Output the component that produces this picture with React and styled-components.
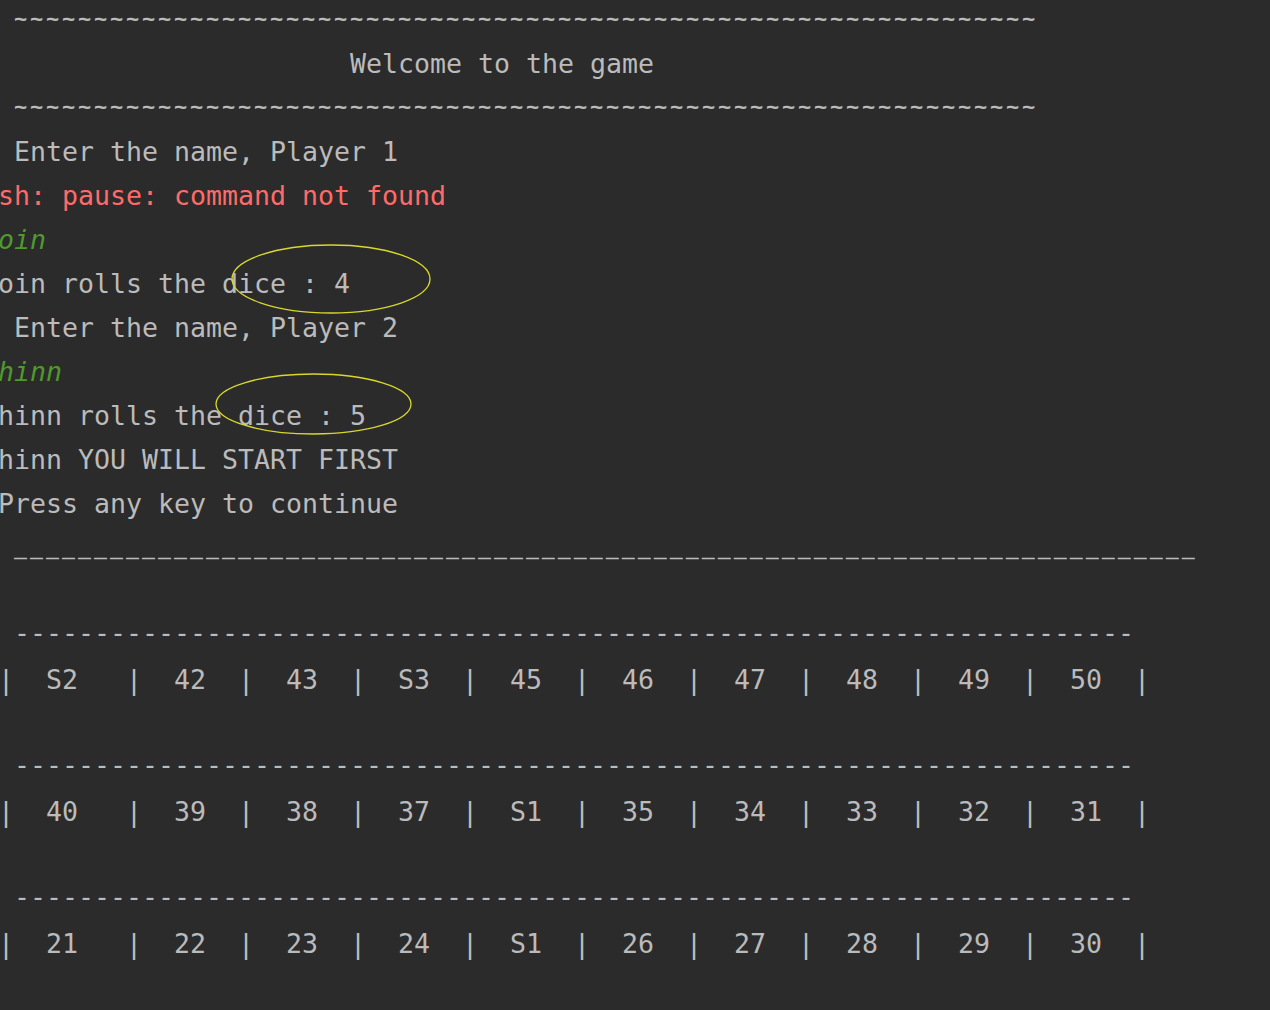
import React from "react";
import styled, { createGlobalStyle } from "styled-components";

const GlobalStyle = createGlobalStyle`
  html, body {
    margin: 0;
    padding: 0;
    background: #2b2b2b;
    overflow: hidden;
  }
`;

const CELL = 16;
const FONT = 26.58;

const tildes = " " + "~".repeat(64);
const dashes = " " + "-".repeat(70);
const longDashes = " " + "\u2013".repeat(74);

const cell = (v, w) => {
  const s = "  " + v;
  return s + " ".repeat(w - s.length);
};
const boardRow = (cells) =>
  "|" + cells.map((c, i) => cell(c, i === 0 ? 7 : 6)).join("|") + "|";

// each entry is one console line; shift nudges glyphs like ~ and - to where they sit in the IDE font,
// size draws a smaller glyph while keeping the 16px cell
const lines = [
  { text: tildes, shift: -1, size: 22, bold: true },
  { text: " ".repeat(22) + "Welcome to the game" },
  { text: tildes, shift: -1, size: 22, bold: true },
  { text: " Enter the name, Player 1" },
  { text: "sh: pause: command not found", kind: "error" },
  { text: "oin", kind: "input" },
  { text: "oin rolls the dice : 4" },
  { text: " Enter the name, Player 2" },
  { text: "hinn", kind: "input" },
  { text: "hinn rolls the dice : 5" },
  { text: "hinn YOU WILL START FIRST" },
  { text: "Press any key to continue" },
  { text: longDashes, shift: 9, size: 21.6 },
  { text: "" },
  { text: dashes, shift: -3 },
  { text: boardRow(["S2", "42", "43", "S3", "45", "46", "47", "48", "49", "50"]) },
  { text: "" },
  { text: dashes, shift: -3 },
  { text: boardRow(["40", "39", "38", "37", "S1", "35", "34", "33", "32", "31"]) },
  { text: "" },
  { text: dashes, shift: -3 },
  { text: boardRow(["21", "22", "23", "24", "S1", "26", "27", "28", "29", "30"]) },
];

const marks = [
  { cx: 331, cy: 279, rx: 99, ry: 34 },
  { cx: 313.5, cy: 404, rx: 97.5, ry: 30 },
];

const App = () => (
  <>
    <GlobalStyle />
    <Screen>
      <Console>
        {lines.map((l, i) => (
          <Line
            key={i}
            $shift={l.shift || 0}
            $size={l.size || FONT}
            $bold={l.bold}
            $kind={l.kind}
          >
            {l.text || " "}
          </Line>
        ))}
      </Console>
      <Marks width="1270" height="1010" viewBox="0 0 1270 1010">
        {marks.map((m, i) => (
          <ellipse
            key={i}
            cx={m.cx}
            cy={m.cy}
            rx={m.rx}
            ry={m.ry}
            fill="none"
            stroke="#d8d82c"
            strokeWidth="1.3"
          />
        ))}
      </Marks>
    </Screen>
  </>
);

const Screen = styled.div`
  position: relative;
  width: 1270px;
  height: 1010px;
  overflow: hidden;
  background: #2b2b2b;
`;

const Console = styled.div`
  display: flex;
  flex-direction: column;
  margin: -2px 0 0 -2px;
  font-family: "DejaVu Sans Mono", "Liberation Mono", monospace;
  color: #bbbbbb;
`;

const kindColor = {
  error: "#ff6b68",
  input: "#4e9a2c",
};

const Line = styled.div`
  height: 44px;
  font-size: ${(p) => p.$size}px;
  font-weight: ${(p) => (p.$bold ? 700 : 400)};
  letter-spacing: ${(p) => CELL - p.$size * 0.60205}px;
  line-height: ${(p) => 44 + p.$shift * 2}px;
  white-space: pre;
  overflow: visible;
  color: ${(p) => kindColor[p.$kind] || "inherit"};
  font-style: ${(p) => (p.$kind === "input" ? "italic" : "normal")};
`;

const Marks = styled.svg`
  position: absolute;
  top: 0;
  left: 0;
  pointer-events: none;
`;

export default App;
